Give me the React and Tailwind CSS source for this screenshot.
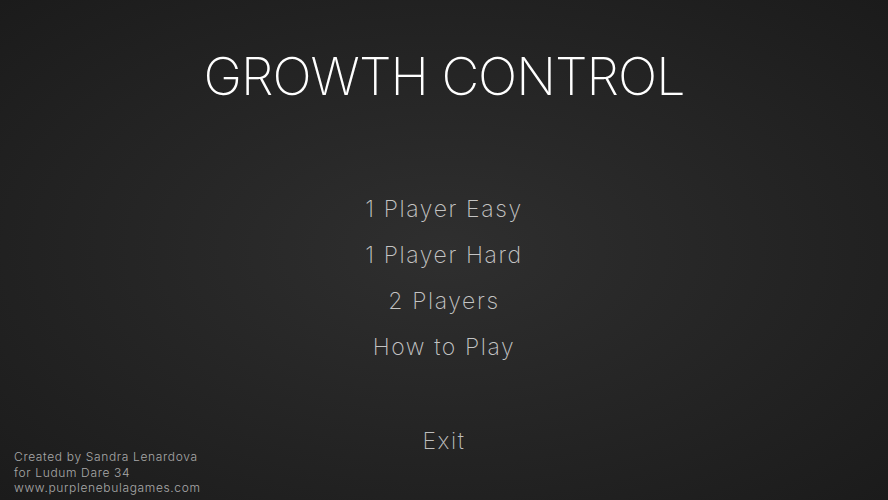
const menu = ['1 Player Easy', '1 Player Hard', '2 Players', 'How to Play']

export default function App() {
  return (
    <div
      className="h-[500px] w-full overflow-hidden flex flex-col items-center bg-[radial-gradient(ellipse_at_center,#2f2f2f_0%,#262626_45%,#1b1b1b_100%)] text-white"
      style={{ fontFamily: 'Inter, "Noto Sans", sans-serif' }}
    >
      <h1 className="mt-[47px] text-[52px] leading-[60px] font-extralight tracking-[-1px] text-white">
        GROWTH CONTROL
      </h1>

      <nav className="mt-[79px] flex flex-col items-center">
        {menu.map(item => (
          <button
            key={item}
            className="h-[46px] text-[23px] leading-[46px] font-extralight tracking-[1.6px] text-[#c4c4c4] hover:text-white"
          >
            {item}
          </button>
        ))}
      </nav>

      <button className="mt-[48px] h-[46px] text-[23px] leading-[46px] font-extralight tracking-[1.6px] text-[#bdbdbd] hover:text-white">
        Exit
      </button>

      <footer className="-mt-[15px] self-stretch px-[14px] text-[12px] leading-[15.5px] tracking-[0.65px] text-[#a9a9a9] font-light">
        <p>Created by Sandra Lenardova</p>
        <p>for Ludum Dare 34</p>
        <p>www.purplenebulagames.com</p>
      </footer>
    </div>
  )
}
